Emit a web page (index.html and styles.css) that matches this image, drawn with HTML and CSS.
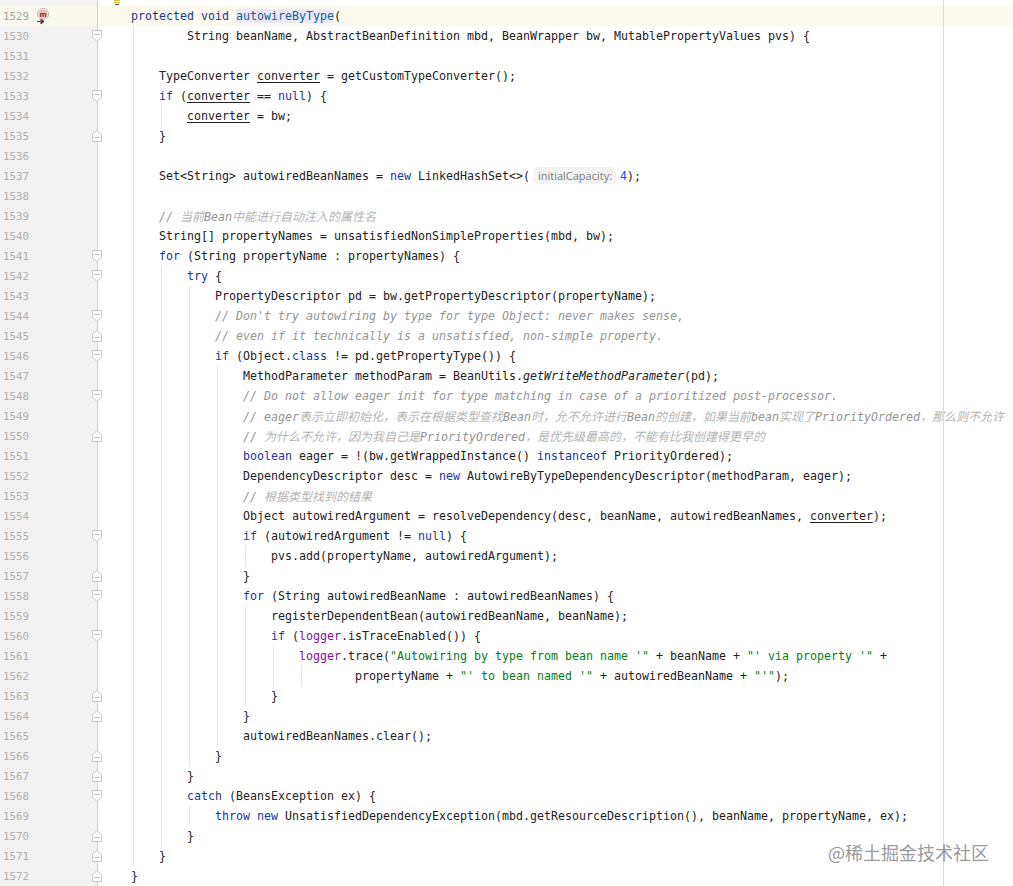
FILE: index.html
```html
<!DOCTYPE html>
<html lang="en">
<head>
<meta charset="utf-8">
<title>AbstractAutowireCapableBeanFactory</title>
<link rel="stylesheet" href="styles.css">
</head>
<body>
<svg class="defs" width="0" height="0" aria-hidden="true">
<symbol id="fo" viewBox="0 0 12 12"><path d="M1.5 .5H10.5V7.5L6 11.5L1.5 7.5Z" fill="#fff" stroke="#c8c8c8"/><path d="M3.5 4.5H8.5" stroke="#b8b8b8"/></symbol>
<symbol id="fc" viewBox="0 0 12 12"><path d="M1.5 11.5H10.5V4.5L6 .5L1.5 4.5Z" fill="#fff" stroke="#c8c8c8"/><path d="M3.5 7.5H8.5" stroke="#b8b8b8"/></symbol>
</svg>
<main class="editor">
<div class="row row-top"><div class="gutter"></div><svg class="bulb" width="8" height="6" viewBox="0 0 8 6"><path d="M1 .5H7M1 2.5H7" stroke="#e0b92c"/><path d="M2 4.5H6" stroke="#555"/></svg></div>
<div class="row row-current"><div class="gutter"><span class="num">1529</span><svg class="mark" width="14" height="18" viewBox="0 0 14 18"><circle cx="7" cy="6" r="5.5" fill="#fff" stroke="#bbb"/><circle cx="7" cy="6" r="4.5" fill="#f3b9b9"/><text x="7" y="8.5" class="mark-m">m</text><path d="M1 13.5H6M5 11L8 13.5L5 16Z" fill="#444" stroke="#444"/></svg></div><pre class="code">    <b>protected void</b> <span class="decl">autowireByType</span>(</pre></div>
<div class="row"><div class="gutter"><span class="num">1530</span><svg class="fold"><use href="#fo"/></svg></div><pre class="code">            String beanName, AbstractBeanDefinition mbd, BeanWrapper bw, MutablePropertyValues pvs) {</pre></div>
<div class="row"><div class="gutter"><span class="num">1531</span></div><pre class="code"></pre></div>
<div class="row"><div class="gutter"><span class="num">1532</span></div><pre class="code">        TypeConverter <u>converter</u> = getCustomTypeConverter();</pre></div>
<div class="row"><div class="gutter"><span class="num">1533</span><svg class="fold"><use href="#fo"/></svg></div><pre class="code">        <b>if</b> (<u>converter</u> == <b>null</b>) {</pre></div>
<div class="row"><div class="gutter"><span class="num">1534</span></div><pre class="code">            <u>converter</u> = bw;</pre></div>
<div class="row"><div class="gutter"><span class="num">1535</span><svg class="fold"><use href="#fc"/></svg></div><pre class="code">        }</pre></div>
<div class="row"><div class="gutter"><span class="num">1536</span></div><pre class="code"></pre></div>
<div class="row"><div class="gutter"><span class="num">1537</span></div><pre class="code">        Set&lt;String&gt; autowiredBeanNames = <b>new</b> LinkedHashSet&lt;&gt;(<span class="hint">initialCapacity:</span> <span class="lit">4</span>);</pre></div>
<div class="row"><div class="gutter"><span class="num">1538</span></div><pre class="code"></pre></div>
<div class="row"><div class="gutter"><span class="num">1539</span></div><pre class="code">        <i>// <span class="cjk">当前</span>Bean<span class="cjk">中能进行自动注入的属性名</span></i></pre></div>
<div class="row"><div class="gutter"><span class="num">1540</span></div><pre class="code">        String[] propertyNames = unsatisfiedNonSimpleProperties(mbd, bw);</pre></div>
<div class="row"><div class="gutter"><span class="num">1541</span><svg class="fold"><use href="#fo"/></svg></div><pre class="code">        <b>for</b> (String propertyName : propertyNames) {</pre></div>
<div class="row"><div class="gutter"><span class="num">1542</span><svg class="fold"><use href="#fo"/></svg></div><pre class="code">            <b>try</b> {</pre></div>
<div class="row"><div class="gutter"><span class="num">1543</span></div><pre class="code">                PropertyDescriptor pd = bw.getPropertyDescriptor(propertyName);</pre></div>
<div class="row"><div class="gutter"><span class="num">1544</span><svg class="fold"><use href="#fo"/></svg></div><pre class="code">                <i>// Don't try autowiring by type for type Object: never makes sense,</i></pre></div>
<div class="row"><div class="gutter"><span class="num">1545</span><svg class="fold"><use href="#fc"/></svg></div><pre class="code">                <i>// even if it technically is a unsatisfied, non-simple property.</i></pre></div>
<div class="row"><div class="gutter"><span class="num">1546</span><svg class="fold"><use href="#fo"/></svg></div><pre class="code">                <b>if</b> (Object.<b>class</b> != pd.getPropertyType()) {</pre></div>
<div class="row"><div class="gutter"><span class="num">1547</span></div><pre class="code">                    MethodParameter methodParam = BeanUtils.<em>getWriteMethodParameter</em>(pd);</pre></div>
<div class="row"><div class="gutter"><span class="num">1548</span><svg class="fold"><use href="#fo"/></svg></div><pre class="code">                    <i>// Do not allow eager init for type matching in case of a prioritized post-processor.</i></pre></div>
<div class="row"><div class="gutter"><span class="num">1549</span></div><pre class="code">                    <i>// eager<span class="cjk">表示立即初始化，表示在根据类型查找</span>Bean<span class="cjk">时，允不允许进行</span>Bean<span class="cjk">的创建，如果当前</span>bean<span class="cjk">实现了</span>PriorityOrdered<span class="cjk">，那么则不允许</span></i></pre></div>
<div class="row"><div class="gutter"><span class="num">1550</span><svg class="fold"><use href="#fc"/></svg></div><pre class="code">                    <i>// <span class="cjk">为什么不允许，因为我自己是</span>PriorityOrdered<span class="cjk">，是优先级最高的，不能有比我创建得更早的</span></i></pre></div>
<div class="row"><div class="gutter"><span class="num">1551</span></div><pre class="code">                    <b>boolean</b> eager = !(bw.getWrappedInstance() <b>instanceof</b> PriorityOrdered);</pre></div>
<div class="row"><div class="gutter"><span class="num">1552</span></div><pre class="code">                    DependencyDescriptor desc = <b>new</b> AutowireByTypeDependencyDescriptor(methodParam, eager);</pre></div>
<div class="row"><div class="gutter"><span class="num">1553</span></div><pre class="code">                    <i>// <span class="cjk">根据类型找到的结果</span></i></pre></div>
<div class="row"><div class="gutter"><span class="num">1554</span></div><pre class="code">                    Object autowiredArgument = resolveDependency(desc, beanName, autowiredBeanNames, <u>converter</u>);</pre></div>
<div class="row"><div class="gutter"><span class="num">1555</span><svg class="fold"><use href="#fo"/></svg></div><pre class="code">                    <b>if</b> (autowiredArgument != <b>null</b>) {</pre></div>
<div class="row"><div class="gutter"><span class="num">1556</span></div><pre class="code">                        pvs.add(propertyName, autowiredArgument);</pre></div>
<div class="row"><div class="gutter"><span class="num">1557</span><svg class="fold"><use href="#fc"/></svg></div><pre class="code">                    }</pre></div>
<div class="row"><div class="gutter"><span class="num">1558</span><svg class="fold"><use href="#fo"/></svg></div><pre class="code">                    <b>for</b> (String autowiredBeanName : autowiredBeanNames) {</pre></div>
<div class="row"><div class="gutter"><span class="num">1559</span></div><pre class="code">                        registerDependentBean(autowiredBeanName, beanName);</pre></div>
<div class="row"><div class="gutter"><span class="num">1560</span><svg class="fold"><use href="#fo"/></svg></div><pre class="code">                        <b>if</b> (<span class="field">logger</span>.isTraceEnabled()) {</pre></div>
<div class="row"><div class="gutter"><span class="num">1561</span></div><pre class="code">                            <span class="field">logger</span>.trace(<span class="str">"Autowiring by type from bean name '"</span> + beanName + <span class="str">"' via property '"</span> +</pre></div>
<div class="row"><div class="gutter"><span class="num">1562</span></div><pre class="code">                                    propertyName + <span class="str">"' to bean named '"</span> + autowiredBeanName + <span class="str">"'"</span>);</pre></div>
<div class="row"><div class="gutter"><span class="num">1563</span><svg class="fold"><use href="#fc"/></svg></div><pre class="code">                        }</pre></div>
<div class="row"><div class="gutter"><span class="num">1564</span><svg class="fold"><use href="#fc"/></svg></div><pre class="code">                    }</pre></div>
<div class="row"><div class="gutter"><span class="num">1565</span></div><pre class="code">                    autowiredBeanNames.clear();</pre></div>
<div class="row"><div class="gutter"><span class="num">1566</span><svg class="fold"><use href="#fc"/></svg></div><pre class="code">                }</pre></div>
<div class="row"><div class="gutter"><span class="num">1567</span><svg class="fold"><use href="#fc"/></svg></div><pre class="code">            }</pre></div>
<div class="row"><div class="gutter"><span class="num">1568</span><svg class="fold"><use href="#fo"/></svg></div><pre class="code">            <b>catch</b> (BeansException ex) {</pre></div>
<div class="row"><div class="gutter"><span class="num">1569</span></div><pre class="code">                <b>throw new</b> UnsatisfiedDependencyException(mbd.getResourceDescription(), beanName, propertyName, ex);</pre></div>
<div class="row"><div class="gutter"><span class="num">1570</span><svg class="fold"><use href="#fc"/></svg></div><pre class="code">            }</pre></div>
<div class="row"><div class="gutter"><span class="num">1571</span><svg class="fold"><use href="#fc"/></svg></div><pre class="code">        }</pre></div>
<div class="row"><div class="gutter"><span class="num">1572</span><svg class="fold"><use href="#fc"/></svg></div><pre class="code">    }</pre></div>

<div class="guide" style="left:133px;top:26px;height:840px"></div>
<div class="guide" style="left:161px;top:106px;height:20px"></div>
<div class="guide" style="left:161px;top:266px;height:580px"></div>
<div class="guide" style="left:189px;top:286px;height:480px"></div>
<div class="guide" style="left:189px;top:806px;height:20px"></div>
<div class="guide" style="left:217px;top:366px;height:380px"></div>
<div class="guide" style="left:245px;top:546px;height:20px"></div>
<div class="guide" style="left:245px;top:606px;height:100px"></div>
<div class="guide" style="left:273px;top:646px;height:40px"></div>
<div class="guide" style="left:301px;top:666px;height:20px"></div>
<div class="margin-line"></div>
<div class="watermark">@稀土掘金技术社区</div>
</main>
</body>
</html>
```
FILE: styles.css
```css
* { box-sizing: border-box; }
html, body { margin: 0; padding: 0; height: 100%; overflow: hidden; background: #fff; }

.defs { position: absolute; }

.editor {
  position: relative;
  width: 1013px;
  height: 886px;
  overflow: hidden;
  background: #fff;
  color: #222;
  font-family: "DejaVu Sans Mono", "Noto Sans CJK SC", monospace;
  font-size: 11.645px;
}

.row { position: relative; display: flex; height: 20px; }
.row-top { height: 6px; }
.row-current { background: #fcfaee; }

.gutter {
  position: relative;
  flex: none;
  display: flex;
  align-items: center;
  width: 98px;
  height: 100%;
  padding-left: 3px;
  background: #f2f2f2;
  border-right: 1px solid #d0d0d0;
}
.row-current .gutter { background: #f9f8ec; }

.num {
  font-size: 10.8px;
  color: #b0b0b0;
}
.row-current .num { color: #a4a4a4; }

.mark { position: absolute; left: 36px; top: 2px; }
.mark-m { font: bold 8px "Liberation Sans", sans-serif; fill: #703030; text-anchor: middle; }

.fold {
  position: absolute;
  left: 91px;
  top: 4px;
  width: 12px;
  height: 12px;
}

.bulb { margin-left: 15px; }

.code {
  margin: 0;
  padding-left: 5px;
  font: inherit;
  line-height: 20px;
  white-space: pre;
}

.code b { font-weight: normal; color: #1c3598; }
.code i { font-style: italic; color: #949494; }
.code em { font-style: italic; }
.code u { text-decoration: underline; text-underline-offset: 2px; }

.cjk {
  font-family: "Noto Sans CJK SC", sans-serif;
  font-size: 12px;
  color: #b4b4b4;
}

.decl { color: #0f5f96; background: #ebe9f7; }
.lit { color: #1750eb; }
.field { color: #871094; }
.str { color: #067d17; }

.hint {
  display: inline-block;
  height: 17px;
  margin: 0 -3px 0 4px;
  padding: 0 4px;
  border-radius: 4px;
  background: #f3f3f3;
  color: #7a7a7a;
  font-family: "Open Sans", sans-serif;
  font-size: 11px;
  line-height: 17px;
}

.guide {
  position: absolute;
  width: 1px;
  background: #e4e4e4;
}

.margin-line {
  position: absolute;
  left: 943px;
  top: 0;
  bottom: 0;
  width: 1px;
  background: #dcdcdc;
}

.watermark {
  position: absolute;
  left: 828px;
  top: 838px;
  color: #9a9a9a;
  font-family: "Noto Sans CJK SC", sans-serif;
  font-size: 18px;
  line-height: 28px;
  white-space: nowrap;
}
```
